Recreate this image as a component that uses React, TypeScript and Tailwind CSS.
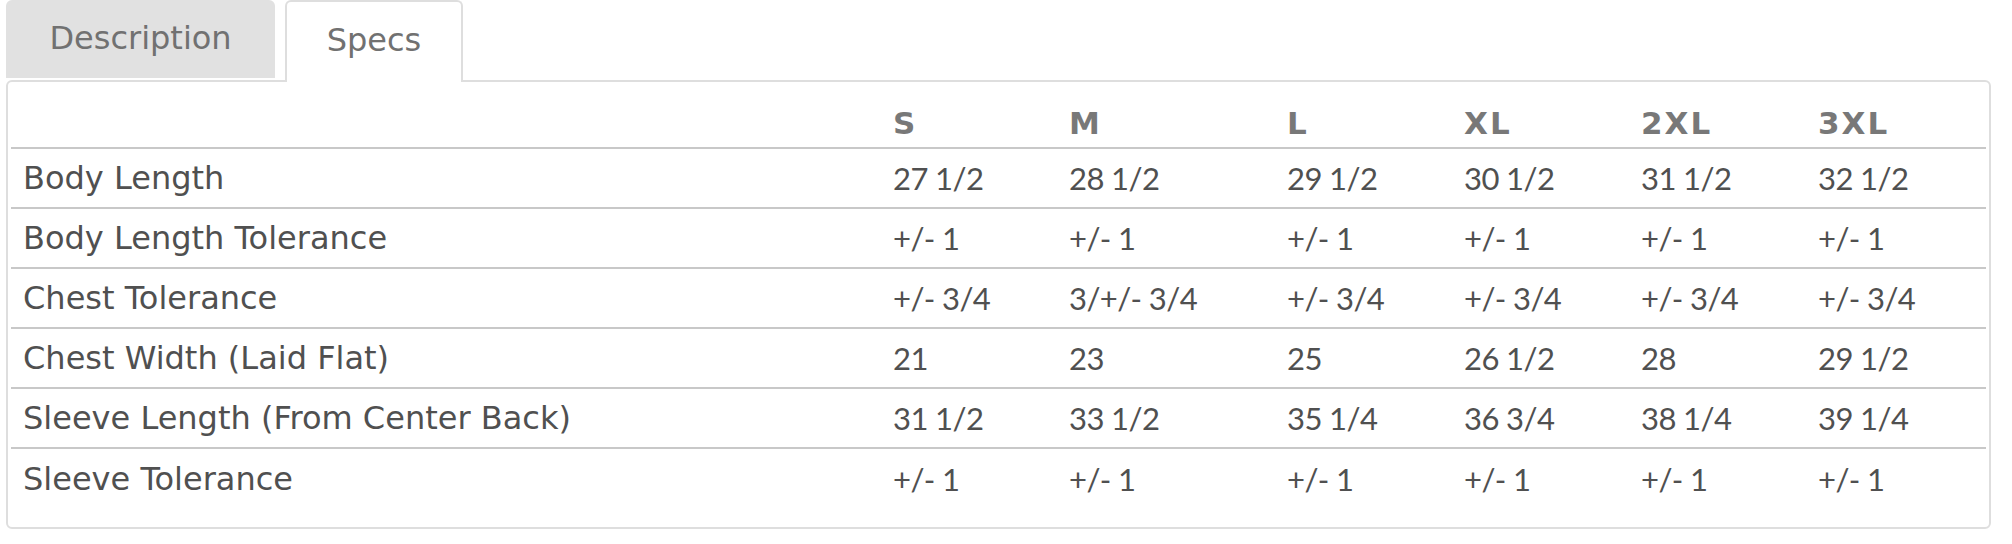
import React from "react";

type Row = { label: string; values: string[] };

const sizes = ["S", "M", "L", "XL", "2XL", "3XL"];

const rows: Row[] = [
  { label: "Body Length", values: ["27 1/2", "28 1/2", "29 1/2", "30 1/2", "31 1/2", "32 1/2"] },
  { label: "Body Length Tolerance", values: ["+/- 1", "+/- 1", "+/- 1", "+/- 1", "+/- 1", "+/- 1"] },
  { label: "Chest Tolerance", values: ["+/- 3/4", "3/+/- 3/4", "+/- 3/4", "+/- 3/4", "+/- 3/4", "+/- 3/4"] },
  { label: "Chest Width (Laid Flat)", values: ["21", "23", "25", "26 1/2", "28", "29 1/2"] },
  { label: "Sleeve Length (From Center Back)", values: ["31 1/2", "33 1/2", "35 1/4", "36 3/4", "38 1/4", "39 1/4"] },
  { label: "Sleeve Tolerance", values: ["+/- 1", "+/- 1", "+/- 1", "+/- 1", "+/- 1", "+/- 1"] },
];

const cols = "grid grid-cols-[870px_176px_218px_177px_177px_177px_180px]";

export default function App() {
  return (
    <div className="w-[2012px] h-[544px] bg-white pl-[6px] pr-[21px] font-['DejaVu_Sans',sans-serif]">
      {/* tabs */}
      <div className="flex items-start gap-[10px] h-[80px]">
        <div className="w-[269px] h-[78px] bg-[#e1e1e1] rounded-t-[6px] flex items-center justify-center pb-[2px] text-[32px] text-[#717171]">
          Description
        </div>
        <div className="relative z-10 w-[178px] h-[82px] bg-white border-2 border-b-0 border-[#dedede] rounded-t-[6px] flex items-center justify-center pb-[4px] text-[32px] text-[#717171]">
          Specs
        </div>
      </div>

      {/* panel */}
      <div className="border-2 border-[#dedede] rounded-[6px] px-[3px] pt-[7px] pb-[18px]">
        <div className={`${cols} h-[60px] pt-[9px] border-b-2 border-[#c8c8c8] items-center`}>
          <div />
          {sizes.map((s) => (
            <div key={s} className="pl-[12px] text-[31px] tracking-[2px] font-bold text-[#787878] leading-[30px]">
              {s}
            </div>
          ))}
        </div>
        {rows.map((r, i) => (
          <div
            key={r.label}
            className={`${cols} h-[60px] items-center ${i < rows.length - 1 ? "border-b-2 border-[#c8c8c8]" : ""}`}
          >
            <div className="pl-[12px] text-[32px] leading-[30px] text-[#505050]">{r.label}</div>
            {r.values.map((v, j) => (
              <div
                key={j}
                className="pl-[12px] text-[31px] tracking-[-0.6px] leading-[30px] text-[#505050] font-['Lato',sans-serif] whitespace-nowrap"
              >
                {v}
              </div>
            ))}
          </div>
        ))}
      </div>
    </div>
  );
}
